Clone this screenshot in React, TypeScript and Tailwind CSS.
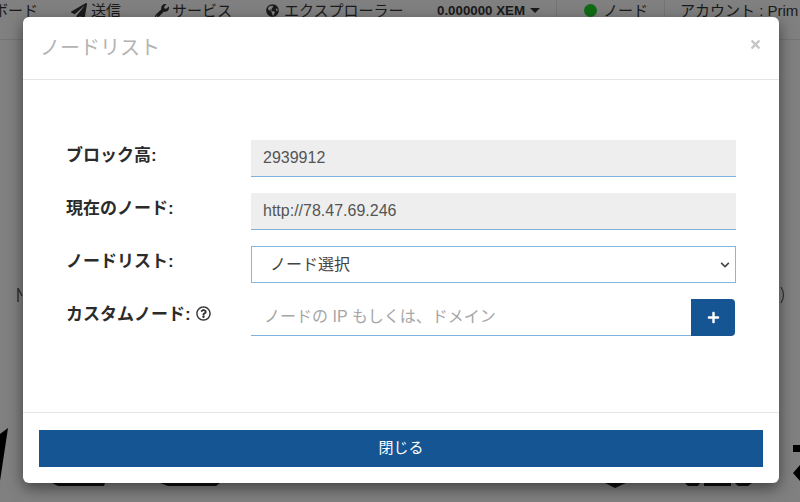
import type { ReactNode } from "react";
import { FaPaperPlane, FaWrench, FaGlobeAmericas, FaPlus, FaChevronDown, FaTimes, FaRegQuestionCircle } from "react-icons/fa";

const font = { fontFamily: '"Liberation Sans", "Noto Sans CJK JP", sans-serif' };

function Field({ label, children, hint }: { label: string; children: ReactNode; hint?: boolean }) {
  return (
    <div className="flex items-start">
      <div className="w-[184px] pt-[4px] -ml-px mr-px text-[17px] font-bold leading-[24px] text-[#2b2b2b] flex items-center gap-[5px] shrink-0">
        <span>{label}</span>
        {hint && <FaRegQuestionCircle className="w-[15px] h-[15px] text-[#333] -mt-[4px] shrink-0" />}
      </div>
      <div className="flex-1">{children}</div>
    </div>
  );
}

export default function App() {
  return (
    <div className="relative w-[800px] h-[502px] overflow-hidden bg-[#808080]" style={font}>
      <div className="h-[40px] border-b border-[#747474] flex items-start text-[15px] leading-[21px] text-[#1a1a1a] whitespace-nowrap">
        <div className="flex items-center h-[21px]">
          <span className="w-[38px] flex justify-end overflow-hidden shrink-0"><span className="shrink-0">ボード</span></span>
          <FaPaperPlane className="ml-[33px] w-[16px] h-[16px] shrink-0" />
          <span className="ml-[4px] shrink-0 w-[30px]">送信</span>
          <FaWrench className="ml-[34px] w-[14px] h-[14px] shrink-0" />
          <span className="ml-[3px] shrink-0 w-[60px]">サービス</span>
          <FaGlobeAmericas className="ml-[34px] w-[13px] h-[13px] shrink-0" />
          <span className="ml-[5px] shrink-0 w-[120px]">エクスプローラー</span>
          <span className="ml-[33px] w-[88px] text-[13.3px] font-bold shrink-0">0.000000 XEM</span>
          <span className="ml-[5px] w-0 h-0 border-x-[5px] border-x-transparent border-t-[5px] border-t-[#1a1a1a] shrink-0" />
          <span className="ml-[16px] w-px h-[21px] bg-[#747474] shrink-0" />
          <span className="ml-[27px] w-[13px] h-[13px] rounded-full bg-[#0f6b14] shrink-0" />
          <span className="ml-[6px] shrink-0 w-[44px]">ノード</span>
          <span className="ml-[17px] w-px h-[21px] bg-[#747474] shrink-0" />
          <span className="ml-[15px] shrink-0">アカウント : Prim</span>
        </div>
      </div>

      <svg className="absolute left-0 top-0 w-[800px] h-[502px]" viewBox="0 0 800 502" aria-hidden="true">
        <path d="M8 428 L0 481 L0 434 Z" fill="#000" />
        <path d="M793 445 H800 V452 H793 Z M800 465 L793 473 L800 481 Z" fill="#000" />
        <path d="M52 483 H105 L104 486 H58 Z M160 483 H220 L216 486 H168 Z M605 483 H626 L615 488 Z M685 483 H700 L698 486 H688 Z M704 483 H731 V486 H704 Z M735 483 H752 L748 486 H738 Z" fill="#111" />
        <path d="M18 288 V302 M18 288 L22 296" stroke="#333" strokeWidth="1.5" fill="none" />
        <path d="M781 287 Q786 295 781 303" stroke="#333" strokeWidth="1.2" fill="none" />
      </svg>

      <div className="absolute left-[23px] top-[17px] w-[756px] h-[466px] bg-white rounded-[6px] shadow-[0_5px_15px_rgba(0,0,0,0.5)] flex flex-col">
        <div className="h-[63px] border-b border-[#e5e5e5] flex items-center justify-between pl-[17px] pr-[17px] shrink-0">
          <span className="text-[20px] text-[#b3b3b3]">ノードリスト</span>
          <FaTimes className="w-[13px] h-[13px] text-[#c8c8c8] -mt-[8px]" />
        </div>
        <div className="flex-1 pl-[44px] pr-[43px] pt-[60px] flex flex-col gap-[16px]">
          <Field label="ブロック高:">
            <div className="h-[37px] bg-[#eeeeee] border-b border-[#7fb2dd] pl-[12px] flex items-center text-[16px] text-[#555]">2939912</div>
          </Field>
          <Field label="現在のノード:">
            <div className="h-[37px] bg-[#eeeeee] border-b border-[#7fb2dd] pl-[12px] flex items-center text-[16px] text-[#555]">http://78.47.69.246</div>
          </Field>
          <Field label="ノードリスト:">
            <div className="h-[37px] border border-[#85b7e0] pl-[18px] pr-[5px] flex items-center justify-between text-[16px] text-[#444]">
              <span>ノード選択</span>
              <FaChevronDown className="w-[10px] h-[10px] text-[#444]" />
            </div>
          </Field>
          <Field label="カスタムノード:" hint>
            <div className="flex h-[37px] mr-px">
              <div className="flex-1 border-b border-[#7fb2dd] pl-[13px] flex items-center text-[16px] text-[#a6a6a6]">ノードの IP もしくは、ドメイン</div>
              <div className="w-[44px] bg-[#155593] rounded-r-[4px] flex items-center justify-center">
                <FaPlus className="w-[13px] h-[13px] text-white" />
              </div>
            </div>
          </Field>
        </div>
        <div className="h-[71px] border-t border-[#e5e5e5] pt-[17px] px-[16px] shrink-0">
          <div className="h-[37px] bg-[#155593] flex items-center justify-center text-[15px] text-white">閉じる</div>
        </div>
      </div>
    </div>
  );
}
